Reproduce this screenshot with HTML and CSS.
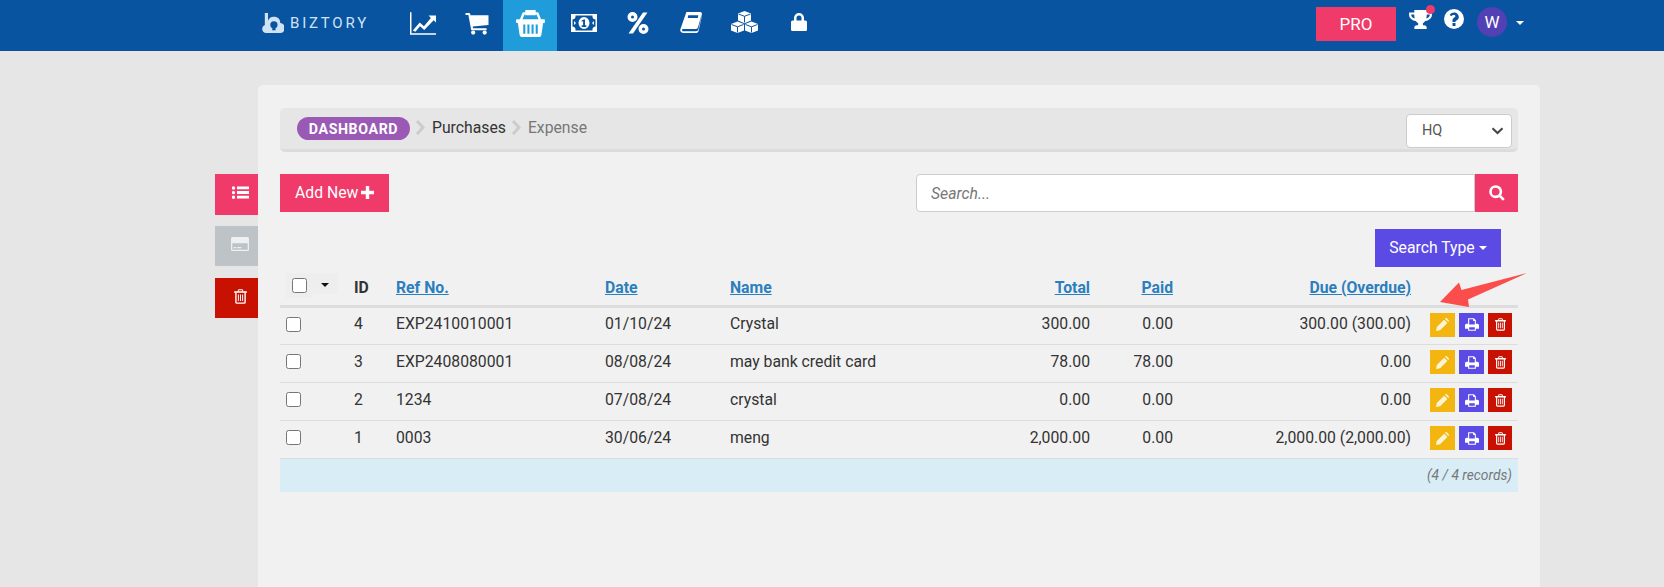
FILE: index.html
```html
<!DOCTYPE html>
<html lang="en">
<head>
<meta charset="utf-8">
<title>Biztory - Expense</title>
<link rel="stylesheet" href="styles.css">
</head>
<body>
<svg class="defs" width="0" height="0" aria-hidden="true">
  <symbol id="i-trash" viewBox="0 0 16 18"><path fill="currentColor" fill-rule="evenodd" d="M5.500 0h5l1.200 2.500H15.500a.5.5 0 0 1 .5.5v1a.5.5 0 0 1-.5.5H14.500V16a2 2 0 0 1-2 2h-9a2 2 0 0 1-2-2V4.500H.5A.5.5 0 0 1 0 4V3a.5.5 0 0 1 .5-.5H4.300ZM6 1.400 5.600 2.500h4.800L10 1.400ZM3.200 4.500V16c0 .3.200.4.300.4h9c.1 0 .3-.1.300-.4V4.500ZM4.800 6.500h1.200v8H4.800Zm2.600 0h1.200v8H7.400Zm2.600 0h1.200v8H10Z"/></symbol>
  <symbol id="i-pencil" viewBox="0 0 16 16"><path fill="currentColor" d="M0 16 1 11 10 2 14 6 5 15ZM11 1l.8-.7c.5-.4 1.100-.4 1.500 0l2.400 2.400c.4.400.4 1 0 1.500L15 5Z"/></symbol>
  <symbol id="i-print" viewBox="0 0 18 16"><path fill="currentColor" fill-rule="evenodd" d="M4 0h7.500L14 2.500V7h2a2 2 0 0 1 2 2v4.500h-4V16H4v-2.500H0V9a2 2 0 0 1 2-2h2ZM5.400 1.400V8h7.200V3.500H10.500V1.400ZM5.400 11.500v3.200h7.200v-3.200Z"/></symbol>
</svg>

<header class="topbar">
  <div class="brand">
    <svg class="brand-mark" viewBox="0 0 24 22" aria-hidden="true"><path fill="#cfe3f5" d="M3 0h3.500v8.500A7 7 0 0 1 20 11a4.600 4.600 0 0 1-.5 11H4.500A4.500 4.500 0 0 1 3 13.300Z"/><circle cx="13" cy="13" r="4" fill="#0854a0"/><path fill="#0854a0" d="M12 14h2l1 5h-4z"/></svg>
    <span class="brand-name">BIZTORY</span>
  </div>
  <nav class="tabs">
    <a class="tab"><svg class="tab-icon" viewBox="0 0 28 24"><path fill="#fff" d="M0 0h1.600v22.400H28V24H0Z"/><path fill="#fff" d="M3 19.500 10.500 11l4.500 4L22.500 6 20 3.500h8V11l-2.500-2.500L15.300 19l-4.500-4-5 6Z"/></svg></a>
    <a class="tab"><svg class="tab-icon" viewBox="0 0 24 24"><path fill="#fff" d="M0 1h3.800a1 1 0 0 1 1 .8L5.200 3.500H24v10L7.500 15.200l.4 1.800H22v2H6L3 3H0Z"/><circle cx="8" cy="21.500" r="2.200" fill="#fff"/><circle cx="20" cy="21.500" r="2.200" fill="#fff"/></svg></a>
    <a class="tab tab-active"><svg class="tab-icon tab-icon-wide" viewBox="0 0 28 26"><path fill="#fff" fill-rule="evenodd" d="M9 0h10v2.200h1.500a1.500 1.500 0 0 1 1.400 1l2.300 5.800H27a1 1 0 0 1 1 1v1.500a1 1 0 0 1-1 1h-.8L24.500 24a2.300 2.300 0 0 1-2.300 2H5.800a2.300 2.300 0 0 1-2.300-2L1.800 12.500H1a1 1 0 0 1-1-1V10a1 1 0 0 1 1-1h2.800l2.300-5.800a1.500 1.500 0 0 1 1.400-1H9ZM8.300 4.200 6.200 9h15.600l-2.100-4.800H19V5H9v-.8ZM7 14v9h2v-9Zm4 0v9h2v-9Zm4 0v9h2v-9Zm4 0v9h2v-9Z"/></svg></a>
    <a class="tab"><svg class="tab-icon tab-icon-money" viewBox="0 0 26 18"><path fill="#fff" fill-rule="evenodd" d="M0 0h26v18H0ZM1.500 5.500v7a3.500 3.500 0 0 1 3 4h17a3.500 3.500 0 0 1 3-4v-7a3.500 3.500 0 0 1-3-4h-17a3.500 3.500 0 0 1-3 4Z"/><path fill="#fff" fill-rule="evenodd" d="M13 3a5.500 6 0 1 1 0 12 5.500 6 0 0 1 0-12Zm-2.300 3.400v1.300l1.400-.4v3.900h-1.400V13h4.600v-1.800H14V5.500h-1.100Z"/><path fill="#fff" d="M3 7 5 9 3 11ZM23 7 21 9 23 11Z"/></svg></a>
    <a class="tab"><svg class="tab-icon tab-icon-sm" viewBox="0 0 22 22"><path fill="#fff" fill-rule="evenodd" d="M5.500 0a5 5 0 1 1 0 10 5 5 0 0 1 0-10Zm0 3.500a1.500 1.500 0 1 0 0 3 1.500 1.500 0 0 0 0-3ZM16.500 12a5 5 0 1 1 0 10 5 5 0 0 1 0-10Zm0 3.500a1.500 1.500 0 1 0 0 3 1.500 1.500 0 0 0 0-3ZM16 .5h4.500L6 21.500H1.500Z"/></svg></a>
    <a class="tab"><svg class="tab-icon tab-icon-sm" viewBox="0 0 24 24"><path fill="#fff" fill-rule="evenodd" d="M7 0h15a2 2 0 0 1 2 2l-3.800 16.500A3 3 0 0 1 17.500 21H3.700C2.500 21 2 20 2.300 19a1 1 0 0 1 1-.5h14c1.500 0 2-.5 2.500-2.400L23.500 3l.5.500-3.500 16A4 4 0 0 1 17 23H4a3.500 3.500 0 0 1-3.700-4ZM9 3.500l-.6 3h11l.6-3Z"/></svg></a>
    <a class="tab"><svg class="tab-icon tab-icon-cubes" viewBox="0 0 29 22"><path fill="#fff" d="M14.500 0 21 2.500v7l-6.500 2.700L8 9.500v-7Z"/><path fill="#fff" d="M7.500 10.500 14 13v6.500L7.500 22 1 19.500V13ZM21.500 10.500 28 13v6.500L21.500 22 15 19.500V13Z"/><path fill="none" stroke="#0854a0" d="M8.500 3 14.500 5.300 20.500 3M14.500 5.300V11.500M1.500 13.500 7.500 15.800 13.500 13.500M7.500 15.800V21.500M15.500 13.500 21.500 15.800 27.500 13.500M21.500 15.800V21.500"/></svg></a>
    <a class="tab"><svg class="tab-icon tab-icon-lock" viewBox="0 0 16 18"><path fill="#fff" fill-rule="evenodd" d="M3 7.500V5a5 5 0 0 1 10 0v2.500h1.500A1.500 1.500 0 0 1 16 9v7.500a1.500 1.500 0 0 1-1.500 1.500h-13A1.500 1.500 0 0 1 0 16.500V9a1.500 1.500 0 0 1 1.500-1.500Zm2.500 0h5V5a2.500 2.500 0 0 0-5 0Z"/></svg></a>
  </nav>
  <div class="topbar-right">
    <a class="pro">PRO</a>
    <span class="trophy">
      <svg class="trophy-icon" viewBox="0 0 24 20"><path fill="#fff" fill-rule="evenodd" d="M5.500 0h13v2.500H24v3c0 3-3.500 5.800-7 6-1 1.300-2 2-2.500 2.300V16h1.500c1.500 0 2.500 1 2.500 2.500V20H5.500v-1.500C5.500 17 6.500 16 8 16h1.500v-2.200c-.5-.3-1.500-1-2.500-2.300-3.500-.2-7-3-7-6v-3h5.500ZM2.300 4.800v.7c0 1.300 1.600 3 3.700 3.500-.4-1.200-.6-2.600-.6-4.200Zm19.400 0h-3.100c0 1.600-.2 3-.6 4.200 2.100-.5 3.700-2.200 3.700-3.500Z"/></svg>
      <i class="trophy-dot"></i>
    </span>
    <svg class="help-icon" viewBox="0 0 20 20"><path fill="#fff" fill-rule="evenodd" d="M10 0a10 10 0 1 1 0 20 10 10 0 0 1 0-20ZM8.500 14v3h3v-3Zm1.700-10.500c-2.200 0-3.700 1-4.500 2.400l1.700 1.300c.6-.8 1.300-1.300 2.400-1.300.9 0 1.600.5 1.600 1.200 0 .8-.6 1.100-1.400 1.600-1 .6-1.500 1.300-1.500 2.500V13h3v-.3c0-.6.300-.9 1-1.300 1.200-.7 2.300-1.600 2.300-3.200 0-2.900-2.300-4.700-4.600-4.700Z"/></svg>
    <span class="avatar">W</span>
    <i class="caret caret-white"></i>
  </div>
</header>

<main class="page">
  <aside class="side">
    <a class="side-btn side-pink"><svg class="side-icon" viewBox="0 0 17 13"><path fill="currentColor" d="M5 .5h12v2.800H5Zm0 4.600h12v2.800H5Zm0 4.600h12v2.800H5ZM1.500.3a1.700 1.700 0 1 1 0 3.400 1.700 1.700 0 0 1 0-3.400Zm0 4.600a1.700 1.700 0 1 1 0 3.400 1.700 1.700 0 0 1 0-3.400Zm0 4.600a1.700 1.700 0 1 1 0 3.400 1.700 1.700 0 0 1 0-3.400Z"/></svg></a>
    <a class="side-btn side-gray"><svg class="side-icon side-icon-card" viewBox="0 0 18 14"><path fill="currentColor" fill-rule="evenodd" d="M1.500 0h15A1.500 1.500 0 0 1 18 1.500v11a1.500 1.500 0 0 1-1.500 1.500h-15A1.500 1.500 0 0 1 0 12.500v-11A1.500 1.500 0 0 1 1.500 0ZM1.300 6.300v6.100c0 .2.100.3.200.3h15c.1 0 .2-.1.200-.3V6.300ZM2.500 10h2.700v1.200H2.500Zm3.800 0h4v1.200h-4Z"/></svg></a>
    <a class="side-btn side-red"><svg class="side-icon side-icon-trash"><use href="#i-trash"/></svg></a>
  </aside>

  <section class="card">
    <div class="crumbs">
      <a class="crumb-pill">DASHBOARD</a>
      <svg class="chev" viewBox="0 0 10 15"><path d="M2 1l6 6.500L2 14" fill="none" stroke="#ccc" stroke-width="3"/></svg>
      <a class="crumb">Purchases</a>
      <svg class="chev" viewBox="0 0 10 15"><path d="M2 1l6 6.500L2 14" fill="none" stroke="#ccc" stroke-width="3"/></svg>
      <span class="crumb crumb-muted">Expense</span>
      <label class="branch-wrap">
        <select class="branch"><option>HQ</option></select>
        <svg class="branch-chev" viewBox="0 0 12 8"><path d="M1 1.200 6 6l5-4.800" fill="none" stroke="#444" stroke-width="2"/></svg>
      </label>
    </div>

    <div class="toolbar">
      <a class="add-btn">Add New<svg class="plus" viewBox="0 0 13 13"><path fill="currentColor" d="M4.800 0h3.400v4.800H13v3.400H8.200V13H4.800V8.200H0V4.800h4.800Z"/></svg></a>
      <div class="search">
        <input class="search-input" type="text" placeholder="Search...">
        <button class="search-btn" type="button"><svg class="search-icon" viewBox="0 0 16 16"><path fill="none" stroke="currentColor" stroke-width="2.600" d="M6.700 1.500a5.200 5.200 0 1 1 0 10.400 5.200 5.200 0 0 1 0-10.400ZM10.500 10.500l4.300 4.300"/></svg></button>
      </div>
    </div>

    <div class="type-row"><a class="type-btn">Search Type<i class="caret caret-small"></i></a></div>

    <table class="grid">
      <thead>
        <tr>
          <th class="c-check"><span class="all-box"><input type="checkbox" class="check"></span><span class="all-menu"><i class="caret caret-dark"></i></span></th>
          <th class="c-id">ID</th>
          <th class="c-ref"><a>Ref No.</a></th>
          <th class="c-date"><a>Date</a></th>
          <th class="c-name"><a>Name</a></th>
          <th class="c-total num"><a>Total</a></th>
          <th class="c-paid num"><a>Paid</a></th>
          <th class="c-due num"><a>Due (Overdue)</a></th>
          <th class="c-act"></th>
        </tr>
      </thead>
      <tbody>
        <tr><td class="c-check"><input type="checkbox" class="check"></td><td>4</td><td>EXP2410010001</td><td>01/10/24</td><td>Crystal</td><td class="num">300.00</td><td class="num">0.00</td><td class="num">300.00 (300.00)</td>
          <td class="c-act"><div class="acts"><a class="act act-edit"><svg class="act-icon"><use href="#i-pencil"/></svg></a><a class="act act-print"><svg class="act-icon act-icon-print"><use href="#i-print"/></svg></a><a class="act act-del"><svg class="act-icon act-icon-trash"><use href="#i-trash"/></svg></a></div></td></tr>
        <tr><td class="c-check"><input type="checkbox" class="check"></td><td>3</td><td>EXP2408080001</td><td>08/08/24</td><td>may bank credit card</td><td class="num">78.00</td><td class="num">78.00</td><td class="num">0.00</td>
          <td class="c-act"><div class="acts"><a class="act act-edit"><svg class="act-icon"><use href="#i-pencil"/></svg></a><a class="act act-print"><svg class="act-icon act-icon-print"><use href="#i-print"/></svg></a><a class="act act-del"><svg class="act-icon act-icon-trash"><use href="#i-trash"/></svg></a></div></td></tr>
        <tr><td class="c-check"><input type="checkbox" class="check"></td><td>2</td><td>1234</td><td>07/08/24</td><td>crystal</td><td class="num">0.00</td><td class="num">0.00</td><td class="num">0.00</td>
          <td class="c-act"><div class="acts"><a class="act act-edit"><svg class="act-icon"><use href="#i-pencil"/></svg></a><a class="act act-print"><svg class="act-icon act-icon-print"><use href="#i-print"/></svg></a><a class="act act-del"><svg class="act-icon act-icon-trash"><use href="#i-trash"/></svg></a></div></td></tr>
        <tr><td class="c-check"><input type="checkbox" class="check"></td><td>1</td><td>0003</td><td>30/06/24</td><td>meng</td><td class="num">2,000.00</td><td class="num">0.00</td><td class="num">2,000.00 (2,000.00)</td>
          <td class="c-act"><div class="acts"><a class="act act-edit"><svg class="act-icon"><use href="#i-pencil"/></svg></a><a class="act act-print"><svg class="act-icon act-icon-print"><use href="#i-print"/></svg></a><a class="act act-del"><svg class="act-icon act-icon-trash"><use href="#i-trash"/></svg></a></div></td></tr>
      </tbody>
    </table>
    <div class="records">(4 / 4 records)</div>
  </section>
</main>

<svg class="arrow" viewBox="0 0 90 36" aria-hidden="true"><path fill="#fb4d4b" d="M0 29 19 9.500 21.500 17 87 0 28 26.500 29 34Z"/></svg>
</body>
</html>
```

FILE: styles.css
```css
* { box-sizing: border-box; }
html, body { margin: 0; height: 587px; overflow: hidden; }
body {
  background: #e6e6e6;
  color: #333;
  font-family: Roboto, "Liberation Sans", sans-serif;
  font-size: 15.750px;
  position: relative;
}
.defs { position: absolute; }
a { cursor: pointer; }

.topbar {
  height: 51px;
  background: #0854a0;
  display: flex;
  padding-left: 262px;
}
.brand { width: 134px; display: flex; align-items: center; gap: 6px; height: 45px; flex: none; white-space: nowrap; }
.brand-mark { width: 22px; height: 20px; flex: none; }
.brand-name { color: #cfe3f5; font-size: 15px; letter-spacing: 2.800px; }
.tabs { display: flex; }
.tab { width: 53.700px; height: 51px; display: flex; align-items: center; justify-content: center; padding-bottom: 5px; }
.tab-active { background: #219cda; }
.tab-icon { width: 26px; height: 23px; }
.tab-icon-wide { width: 29px; height: 27px; }
.tab-icon-sm { width: 22px; height: 22px; }
.tab-icon-money { width: 26px; height: 18px; }
.tab-icon-cubes { width: 29px; height: 22px; margin-bottom: 2px; }
.tab-icon-lock { width: 16px; height: 18px; margin-bottom: 2px; }

.topbar-right { margin-left: auto; padding-top: 7px; width: 348px; display: flex; align-items: flex-start; }
.pro { width: 80px; height: 34px; background: #f03a6a; color: #fff; font-size: 17px; display: flex; align-items: center; justify-content: center; }
.trophy { position: relative; width: 23px; height: 20px; margin: 3px 0 0 13px; }
.trophy-icon { width: 23px; height: 19px; display: block; }
.trophy-dot { position: absolute; right: -3px; top: -5px; width: 9px; height: 9px; border-radius: 50%; background: #f03a6a; }
.help-icon { width: 20px; height: 20px; margin: 2px 0 0 12px; }
.avatar { width: 30px; height: 30px; margin-left: 13px; border-radius: 50%; background: #5240b5; color: #fff; font-size: 17px; display: flex; align-items: center; justify-content: center; }
.caret { display: inline-block; width: 0; height: 0; border-left: 4px solid transparent; border-right: 4px solid transparent; border-top: 4px solid currentColor; }
.caret-white { color: #fff; margin: 14px 0 0 9px; }
.caret-small { color: #fff; vertical-align: middle; }
.caret-dark { color: #111; display: block; }

.page { display: flex; padding: 34px 124px 0 215px; height: 536px; }
.side { width: 43px; flex: none; padding-top: 89px; display: flex; flex-direction: column; }
.side-btn { height: 41px; display: flex; align-items: center; justify-content: center; color: #fff; margin-bottom: 11px; padding: 0 0 4px 7px; }
.side-pink { background: #f03a6a; }
.side-gray { background: #bdc3c7; height: 40px; margin-bottom: 12px; color: #eef0f1; }
.side-red { background: #c91102; height: 40px; }
.side-icon { width: 17px; height: 13px; }
.side-icon-card { width: 18px; height: 14px; }
.side-icon-trash { width: 13px; height: 15px; }

.card { flex: 1; background: #f1f1f1; border-radius: 5px 5px 0 0; padding: 23px 22px 0; }
.crumbs {
  height: 44px;
  background: #e6e6e6;
  border-bottom: 3px solid #dcdcdc;
  border-radius: 5px;
  display: flex;
  align-items: center;
  padding: 0 6px 0 17px;
}
.crumb-pill { width: 113px; height: 23px; border-radius: 12px; background: #9b59b6; color: #fff; font-weight: 700; font-size: 14.200px; letter-spacing: .6px; display: flex; align-items: center; justify-content: center; }
.chev { width: 10px; height: 15px; margin: -3px 7px 0 5px; }
.crumb { margin-top: -2px; color: #333; }
.crumb-muted { color: #777; }
.branch-wrap { position: relative; display: block; margin: 4px 0 0 auto; width: 106px; height: 34px; }
.branch {
  display: block;
  appearance: none;
  width: 106px;
  height: 34px;
  padding: 0 0 0 15px;
  border: 1px solid #ccc;
  border-radius: 4px;
  background: #fff;
  color: #555;
  font: 14.500px Roboto, sans-serif;
}
.branch-chev { position: absolute; right: 8px; top: 13px; width: 13px; height: 8px; }

.toolbar { display: flex; justify-content: space-between; margin-top: 22px; }
.add-btn { width: 109px; height: 38px; background: #f03a6a; color: #fff; display: flex; align-items: center; padding: 0 0 2px 15px; gap: 3px; white-space: nowrap; }
.plus { width: 13px; height: 13px; }
.search { display: flex; width: 602px; height: 38px; }
.search-input { flex: 1; min-width: 0; border: 1px solid #ccc; border-radius: 4px 0 0 4px; background: #fff; padding: 0 14px; font: italic 15.750px Roboto, sans-serif; color: #333; }
.search-input::placeholder { color: #777; opacity: 1; }
.search-btn { width: 43px; border: 0; padding: 0; background: #f03a6a; color: #fff; display: flex; align-items: center; justify-content: center; }
.search-icon { width: 16px; height: 16px; }

.type-row { display: flex; justify-content: flex-end; padding: 17px 17px 0 0; }
.type-btn { width: 126px; height: 38px; background: #5b4ae4; color: #fff; display: flex; align-items: center; justify-content: center; gap: 4px; padding-bottom: 1px; }

.grid { width: 1238px; border-collapse: collapse; table-layout: fixed; }
.grid th { height: 39px; padding: 3px 8px 0; text-align: left; border-bottom: 3px solid #ddd; font-weight: 700; vertical-align: middle; }
.grid th a { color: #2b7fbe; text-decoration: underline; }
.grid td { height: 38px; padding: 0 8px 4px; border-bottom: 1px solid #ddd; vertical-align: middle; }
.grid .num { text-align: right; }
.grid .c-check { width: 66px; }
.grid td.c-check { padding: 0 0 3px 6px; }
.grid .c-id { width: 42px; }
.grid .c-ref { width: 209px; }
.grid .c-date { width: 125px; }
.grid .c-name { width: 278px; }
.grid .c-total { width: 98px; }
.grid .c-paid { width: 83px; }
.grid .c-due { width: 238px; }
.grid .c-act { width: 99px; padding: 0 6px 2px 11px; }
.check { margin: 0; width: 15px; height: 15px; display: block; }
.grid th.c-check { padding: 6px 0 0 6px; vertical-align: top; white-space: nowrap; font-size: 0; }
.all-box { display: inline-block; background: #eeeeee; padding: 5px 6px; height: 25px; vertical-align: top; }
.all-menu { display: inline-block; background: #eeeeee; width: 25px; height: 21px; padding: 10px 0 0 8px; vertical-align: top; }
.acts { display: flex; gap: 4px; }
.act { width: 25px; height: 24px; display: flex; align-items: center; justify-content: center; color: #fff; }
.act-edit { background: #f3b50f; color: #fdf3d5; }
.act-print { background: #5b4ae4; }
.act-del { background: #c91102; width: 24px; }
.act-icon { width: 13px; height: 13px; }
.act-icon-print { width: 14px; height: 13px; }
.act-icon-trash { width: 11px; height: 13px; }

.records { height: 33px; background: #d9edf7; color: #777; font-style: italic; font-size: 13.800px; text-align: right; padding: 8px 6px 0 0; }

.arrow { position: absolute; left: 1440px; top: 273px; width: 90px; height: 36px; }
```
